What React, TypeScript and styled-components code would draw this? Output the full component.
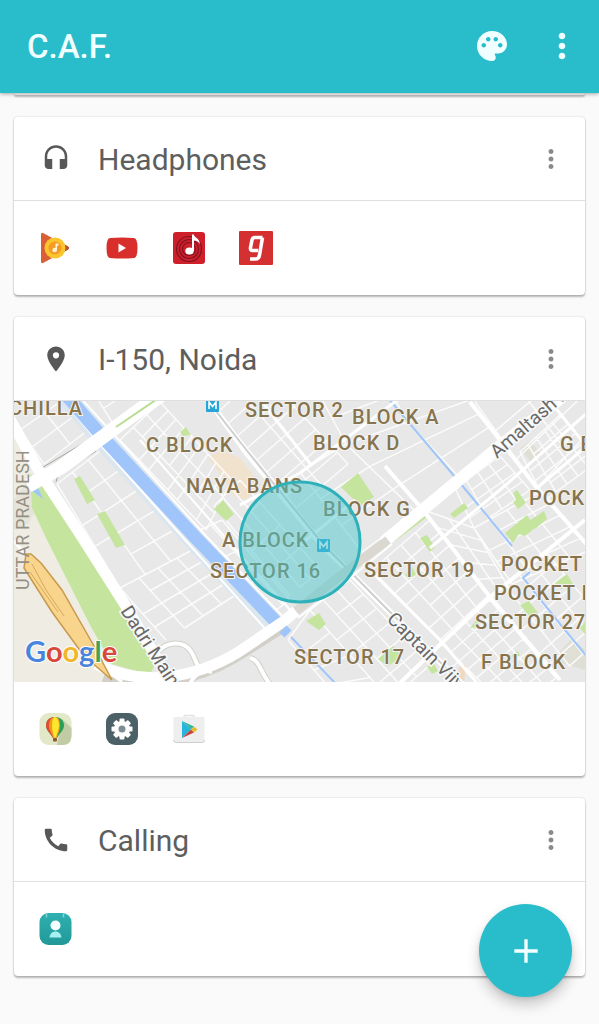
import React from "react";
import styled, { createGlobalStyle } from "styled-components";
import { MdAdd, MdCall, MdHeadset, MdMoreVert, MdPalette, MdPlace } from "react-icons/md";

const teal = "#29bdcb";

const GlobalStyle = createGlobalStyle`
  * { box-sizing: border-box; }
  body {
    margin: 0;
    background: #fafafa;
    font-family: Roboto, "Liberation Sans", sans-serif;
    color: #5e5e5e;
  }
`;

const Page = styled.div`
  min-height: 100vh;
`;

const AppBar = styled.header`
  position: sticky;
  top: 0;
  z-index: 2;
  display: flex;
  align-items: center;
  height: 93px;
  padding: 0 14px 2px 27px;
  background: ${teal};
  box-shadow: 0 1px 4px rgba(0, 0, 0, 0.35);
`;

const AppTitle = styled.h1`
  flex: 1;
  margin: 0;
  padding-top: 2px;
  font-size: 33px;
  line-height: 40px;
  font-weight: 500;
  color: #f0ffff;
`;

const BarActions = styled.div`
  display: flex;
  align-items: center;
  gap: 26px;
`;

const IconButton = styled.button<{ $size: number; $color: string }>`
  display: flex;
  align-items: center;
  justify-content: center;
  width: ${(p) => p.$size + 6}px;
  height: ${(p) => p.$size + 6}px;
  padding: 0;
  border: 0;
  background: none;
  color: ${(p) => p.$color};
  font-size: ${(p) => p.$size}px;
  cursor: pointer;
`;

const Feed = styled.main`
  display: flex;
  flex-direction: column;
  gap: 22px;
  padding: 0 14px 47px;
`;

const cardShadow = "0 2px 2px rgba(0, 0, 0, 0.26), 0 0 2px rgba(0, 0, 0, 0.2)";

const PassedCard = styled.div`
  height: 2px;
  border-radius: 0 0 4px 4px;
  background: #fff;
  box-shadow: ${cardShadow};
`;

const Card = styled.section`
  border-radius: 4px;
  background: #fff;
  box-shadow: ${cardShadow};
  overflow: hidden;
`;

const CardHeader = styled.header`
  display: flex;
  align-items: center;
  height: 84px;
  padding: 0 16px 0 27px;
  border-bottom: 1px solid #e0e0e0;
`;

const CardIcon = styled.span`
  display: flex;
  width: 57px;
  font-size: 30px;
  color: #585858;
`;

const CardTitle = styled.h2`
  flex: 1;
  margin: 0;
  padding-top: 2px;
  font-size: 30px;
  line-height: 36px;
  font-weight: 400;
`;

const AppRow = styled.div`
  display: flex;
  align-items: center;
  gap: 33px;
  height: 94px;
  padding: 0 24px;
`;

const AppButton = styled.button`
  width: 34px;
  height: 34px;
  padding: 0;
  border: 0;
  background: none;
  cursor: pointer;

  svg {
    display: block;
    width: 100%;
    height: 100%;
  }
`;

const MapPicture = styled.svg`
  display: block;
  width: 100%;
  height: auto;
`;

const AreaLabel = styled.text`
  font-size: 20px;
  font-weight: 500;
  letter-spacing: 1px;
  fill: #85744f;
  stroke: #f4f2ee;
  stroke-width: 2px;
  paint-order: stroke;
`;

const RoadLabel = styled.text`
  font-size: 19px;
  fill: #686868;
  stroke: #f8f8f8;
  stroke-width: 3px;
  paint-order: stroke;
`;

const StateLabel = styled.text`
  font-size: 18px;
  fill: #949084;
`;

const MapBrand = styled.text`
  font-family: Lato, Roboto, sans-serif;
  font-size: 29px;
  font-weight: 700;
  stroke: #fff;
  stroke-width: 2px;
  paint-order: stroke;
`;

const AddButton = styled.button`
  position: fixed;
  right: 27px;
  bottom: 27px;
  z-index: 3;
  display: flex;
  align-items: center;
  justify-content: center;
  width: 93px;
  height: 93px;
  padding: 0;
  border: 0;
  border-radius: 50%;
  background: ${teal};
  color: #f4ffff;
  font-size: 40px;
  box-shadow: 0 8px 14px rgba(0, 0, 0, 0.2), 0 2px 4px rgba(0, 0, 0, 0.1);
  cursor: pointer;
`;

type Point = [number, number];

const mix = (a: Point, b: Point, t: number): Point => [a[0] + (b[0] - a[0]) * t, a[1] + (b[1] - a[1]) * t];

/* Streets of one city block: corners a, b, c, d in order round the block. */
function streets([a, b, c, d]: Point[], cols: number, rows: number): string {
  const parts: string[] = [];
  for (let i = 0; i <= cols; i++) {
    const t = i / cols;
    parts.push(`M${mix(a, b, t).join(" ")}L${mix(d, c, t).join(" ")}`);
  }
  for (let j = 0; j <= rows; j++) {
    const t = j / rows;
    const skip = j % 3 === 1 && cols > 2 ? 1 / cols : 0;
    const from = mix(a, d, t);
    const to = mix(b, c, t);
    parts.push(`M${mix(from, to, skip).join(" ")}L${to.join(" ")}`);
  }
  return parts.join("");
}

const minorStreets = [
  streets([[57, 484], [104, 448], [196, 548], [120, 588]], 3, 5),
  streets([[120, 588], [196, 548], [240, 592], [166, 640]], 4, 4),
  streets([[120, 440], [160, 402], [232, 480], [206, 530]], 3, 9),
  streets([[20, 430], [70, 395], [96, 424], [44, 464]], 2, 2),
  streets([[95, 395], [150, 350], [180, 385], [112, 422]], 2, 2),
  streets([[218, 412], [262, 372], [348, 464], [296, 508]], 2, 8),
  streets([[290, 340], [400, 290], [470, 400], [346, 444]], 2, 4),
  streets([[346, 444], [470, 400], [500, 440], [416, 512]], 2, 3),
  streets([[300, 472], [346, 444], [416, 512], [362, 552]], 1, 3),
  streets([[475, 402], [545, 350], [600, 420], [537, 488]], 2, 3),
  streets([[520, 452], [560, 415], [600, 460], [545, 500]], 5, 5),
  streets([[455, 488], [500, 456], [530, 490], [474, 528]], 4, 4),
  streets([[424, 510], [474, 528], [510, 590], [490, 597]], 2, 5),
  streets([[474, 528], [540, 492], [590, 550], [512, 584]], 4, 5),
  streets([[372, 570], [430, 520], [488, 596], [440, 640]], 4, 6),
  streets([[310, 610], [350, 580], [430, 665], [390, 700]], 3, 6),
  streets([[288, 640], [310, 610], [390, 700], [340, 700]], 1, 4),
  streets([[430, 655], [490, 600], [556, 678], [500, 720]], 5, 8),
  streets([[492, 597], [546, 552], [610, 630], [556, 678]], 4, 7),
  streets([[200, 530], [222, 520], [290, 600], [276, 610]], 2, 3),
  streets([[214, 506], [240, 480], [320, 570], [290, 596]], 3, 4),
].join("");

function MetroStop({ x, y }: { x: number; y: number }) {
  return (
    <g>
      <rect x={x} y={y} width="13" height="13" rx="1" fill="#27a4d8" />
      <path d={`M${x + 3} ${y + 10}V${y + 3}l3.500 4.500 3.500-4.500v7`} fill="none" stroke="#fff" strokeWidth="1.600" />
    </g>
  );
}

const areas: [string, number, number][] = [
  ["CHILLA", 9, 415],
  ["SECTOR 2", 245, 417],
  ["BLOCK A", 352, 424],
  ["C BLOCK", 146, 452],
  ["BLOCK D", 313, 450],
  ["G BLOCK", 560, 451],
  ["NAYA BANS", 186, 493],
  ["BLOCK G", 323, 516],
  ["POCKET", 529, 505],
  ["A BLOCK", 222, 547],
  ["SECTOR 16", 210, 578],
  ["SECTOR 19", 364, 577],
  ["POCKET", 501, 571],
  ["POCKET I", 494, 600],
  ["SECTOR 27", 475, 629],
  ["SECTOR 17", 294, 664],
  ["F BLOCK", 481, 669],
];

const rampLoops = "M158 652C166 642 182 640 190 650S192 668 212 672M190 684C194 674 206 668 216 664M250 658C260 660 260 672 270 684";

function PlaceMap() {
  return (
    <MapPicture viewBox="14 401 571 281" role="img" aria-label="Map of Noida">
      <rect x="14" y="401" width="571" height="281" fill="#e8e8e8" />
      <path d="M14 430L48 490 112 668 125 682H14Z" fill="#efece4" />
      <path d="M14 500l14-20 8 30 -8 14 -14 6Z" fill="#e6e3d8" />
      <path d="M208 458l12-8 20 8 20 26 -14 16 -12-4 -18-28Z" fill="#f1e2cd" />
      <path d="M520 448l10-7 12 14 -10 9Z M552 660l20-22 13 12v20Z" fill="#e0dfd6" />
      <path d={minorStreets} fill="none" stroke="#fbfbfb" strokeWidth="1.500" />

      <g fill="#c5e59f">
        <path d="M30 474L42 484 82 543 156 662 150 675 112 664 90 625 47 540 32 508Z" />
        <path d="M74 479l6-3 15 24 -8 4Z M97 514l8-3 20 34 -9 3Z" />
        <path d="M341 487l17-14 16 24 -14 9Z M214 509l9-9 11 14 -8 7Z" />
        <path d="M306 621l13-8 7 11 -7 6Z M378 659l15-13 9 10 -14 10Z" />
        <path d="M450 514l14-11 4 5 -14 10Z M513 493l4-3 9 13 -8 6 -5-7 3-2Z" />
        <path d="M505 533l22-18 8 13 -10 8 -6-2 -6 9Z M529 521l15-10 3 8 -12 10Z" />
        <path d="M393 538l31-22 2 2 -31 23Z M420 538l7-3 8 12 -5 5Z" />
        <path d="M555 583l12-9 6 10 -12 5Z M520 605l9-4 9 12 -9 3Z M470 628l8-10 2 9Z" />
        <path d="M427 667l6-5 5 9 -6 3Z M405 575l7-8 4 8 -7 4Z M180 432l6-5 5 8 -8 1Z" />
        <path d="M580 628l5-6v12Z M510 657l8-6 2 5Z" />
      </g>
      <path d="M458 672l3-9 5 3 -2 16 -5 0Z" fill="#f0d8c2" />

      <path d="M66 395L106 443 194 540 278 628" fill="none" stroke="#dbe6ee" strokeWidth="21" />
      <path d="M59 395L99 443 187 542 270 634M78 395L116 437 206 536 288 622" fill="none" stroke="#fff" strokeWidth="2" />
      <path d="M66 395L106 441 194 536 278 624" fill="none" stroke="#9fc5fa" strokeWidth="13" />
      <path d="M291 637L336 684" fill="none" stroke="#9fc5fa" strokeWidth="2" />
      <path d="M388 398L455 477 480 507 512 546M530 572L523 578 560 624 588 658" fill="none" stroke="#9fc5fa" strokeWidth="2" />
      <path d="M31 490l7-2 5 11Z" fill="#9fc5fa" />

      <g fill="none" stroke="#fff" strokeLinejoin="round">
        <path d="M470 402L500 440 537 488 588 546" strokeWidth="4" />
        <path d="M385 466L423 510 490 597 560 680" strokeWidth="4" />
        <path d="M400 683L490 597 585 520" strokeWidth="4" />
        <path d="M430 548L507 484 588 412M262 402L312 466M240 505L300 473 400 398M355 500L300 545" strokeWidth="3" />
        <path d="M140 440L245 560 292 612M118 433L172 395" strokeWidth="2" />
        <path d="M537 488L588 445M545 395L588 448M360 560L440 640 478 684" strokeWidth="3" />
      </g>

      <path d="M40 469L92 438M56 482L58 475 96 451" stroke="#a8a49c" strokeWidth="1" fill="none" />
      <path d="M210 402L246 452 322 545 386 608 462 684" fill="none" stroke="#fff" strokeWidth="6" />
      <path d="M212 406L248 452 322 543 386 608 462 684" fill="none" stroke="#cfcfcf" strokeWidth="2" />

      <path d={rampLoops} fill="none" stroke="#d2d0c8" strokeWidth="6" />
      <path d="M104 676C150 694 210 674 246 650L284 626" fill="none" stroke="#d2d0c8" strokeWidth="12" />
      <g fill="none" stroke="#fff" strokeLinejoin="round">
        <path d={rampLoops} strokeWidth="4" />
        <path d="M6 412L42 476 80 534 122 600 158 660" strokeWidth="11" />
        <path d="M28 486L60 468 104 436 158 396" strokeWidth="14" />
        <path d="M96 664C150 692 210 672 246 647L284 621 296 611" strokeWidth="11" />
        <path d="M386 540L500 446 566 394" strokeWidth="12" strokeLinecap="round" />
      </g>
      <path d="M116 427L166 393" fill="none" stroke="#b8dc90" strokeWidth="2" />
      <path d="M296 611L336 579 388 540" fill="none" stroke="#dad8d0" strokeWidth="9" />
      <path d="M298 618L350 578 392 544" fill="none" stroke="#fff" strokeWidth="2" />
      <path d="M283 629l5 5" fill="none" stroke="#9fc5fa" strokeWidth="10" />

      <path d="M14 541L30 560 52 596 84 646 104 668 122 682" fill="none" stroke="#fff" strokeWidth="3" />
      <path d="M26 554L31 554 41 563 62 590 94 646 112 680 84 656 52 612 24 568Z" fill="#f8d48c" stroke="#c99a4d" strokeWidth="1.500" />
      <path d="M32 564L46 590 64 616M30 572L58 612" fill="none" stroke="#d8a95b" strokeWidth="1" />

      <MetroStop x={206} y={399} />
      <MetroStop x={317} y={539} />
      {areas.map(([name, x, y]) => (
        <AreaLabel key={`${name}${y}`} x={x} y={y}>
          {name}
        </AreaLabel>
      ))}
      <StateLabel transform="translate(29 590) rotate(-90)">UTTAR PRADESH</StateLabel>
      <RoadLabel transform="translate(497 459) rotate(-41)">Amaltash M</RoadLabel>
      <RoadLabel transform="translate(120 611) rotate(57)">Dadri Main</RoadLabel>
      <RoadLabel transform="translate(386 620) rotate(45)">Captain Vijv</RoadLabel>

      <circle cx="300" cy="542" r="60" fill="#4cc5ce" fillOpacity="0.5" stroke="#2fb1ba" strokeWidth="3" />
      <MapBrand x="25" y="662">
        <tspan fill="#4a84dc">G</tspan>
        <tspan fill="#d8493c">o</tspan>
        <tspan fill="#f0b62c">o</tspan>
        <tspan fill="#4a84dc">g</tspan>
        <tspan fill="#3fa35a">l</tspan>
        <tspan fill="#d8493c">e</tspan>
      </MapBrand>
    </MapPicture>
  );
}

const PlayMusicIcon = () => (
  <svg viewBox="0 0 34 34" aria-hidden="true">
    <path d="M3 3.500Q3 1 5.500 2.200L30 15.500Q32 17 30 18.500L5.500 31.800Q3 33 3 30.500Z" fill="#db5f36" />
    <path d="M26 13l4 2.500Q32 17 30 18.500L26 21Z" fill="#b84f35" />
    <circle cx="17" cy="17" r="10.500" fill="#fbc62c" />
    <circle cx="17" cy="17" r="6.500" fill="#f59a22" />
    <path d="M17.500 12.500h3v2.200h-1.500v4.300a2.300 2.300 0 1 1-1.500-2.100Z" fill="#fff4cf" />
  </svg>
);

const YouTubeIcon = () => (
  <svg viewBox="0 0 34 34" aria-hidden="true">
    <path d="M5 7Q17 6 29 7Q32.500 7.500 32.500 17T29 27Q17 28 5 27Q1.500 26.500 1.500 17T5 7Z" fill="#d92f2c" />
    <path d="M13.500 12.500v9l7.500-4.500Z" fill="#fff" />
  </svg>
);

const MusicPlayerIcon = () => (
  <svg viewBox="0 0 34 34" aria-hidden="true">
    <rect x="1" y="1" width="32" height="32" rx="3" fill="#cf1f2b" />
    <g fill="none" stroke="#7d1420" strokeWidth="1.200">
      <circle cx="17" cy="18" r="12.500" />
      <circle cx="17" cy="18" r="9.500" />
      <circle cx="17" cy="18" r="6.500" />
    </g>
    <ellipse cx="17.500" cy="20" rx="4.200" ry="3.500" fill="#fff" />
    <path d="M20 20V3.500h1.800c.5 3.500 6 3.500 6 9.500c-1.500-3-4-3.500-5.800-3.500V20Z" fill="#fff" />
  </svg>
);

const GaanaIcon = () => (
  <svg viewBox="0 0 34 34" aria-hidden="true">
    <rect width="34" height="34" rx="1" fill="#d42f31" />
    <path
      d="M23.500 6.500H16q-2.500 0-3 2.500l-1.500 7.500q-.4 3 2 3h5.500M23.500 6.500L20.500 24q-.6 4-4 4H11"
      fill="none"
      stroke="#fff"
      strokeWidth="3.600"
      strokeLinejoin="round"
    />
  </svg>
);

const BalloonIcon = () => (
  <svg viewBox="0 0 34 34" aria-hidden="true">
    <rect x="1.500" y="1" width="32" height="32" rx="9" fill="#e2e8c8" />
    <path d="M24 7l9.500 9v8q0 9-9 9H19Z" fill="#c2cca4" />
    <path d="M17 5c-6 0-9 4-9 8.500 0 5 5 8 6.500 12h5c1.500-4 6.500-7 6.500-12C26 9 23 5 17 5Z" fill="#2d9d55" />
    <path d="M17 5c-6 0-9 4-9 8.500 0 5 5 8 6.500 12H17Z" fill="#e34c2f" />
    <path d="M17 5c-4 0-6 4-6 8.500s3 8 4 12h4c1-4 3-7.500 3-12S21 5 17 5Z" fill="#ef9b20" />
    <path d="M17 5c-2 0-3 4-3 8.500s1.500 8 2 12h2c.500-4 3-7.500 3-12S19 5 17 5Z" fill="#ffe62e" />
    <rect x="15" y="26" width="4" height="3.500" rx="1" fill="#8a5a2c" />
  </svg>
);

const SettingsIcon = () => (
  <svg viewBox="0 0 34 34" aria-hidden="true">
    <rect x="1" y="1" width="32" height="32" rx="9" fill="#4c6067" />
    <g fill="#fff">
      {[0, 45, 90, 135].map((turn) => (
        <rect key={turn} x="14.500" y="6.500" width="5" height="21" rx="1" transform={`rotate(${turn} 17 17)`} />
      ))}
      <circle cx="17" cy="17" r="8" />
    </g>
    <circle cx="17" cy="17" r="3.500" fill="#7e8d92" />
  </svg>
);

const PlayStoreIcon = () => (
  <svg viewBox="0 0 34 34" aria-hidden="true">
    <path d="M12 6V4.500q0-1 1-1h8q1 0 1 1V6" fill="none" stroke="#e2e2e2" strokeWidth="1.500" />
    <path d="M1.500 5h31v23q0 2.500-2.500 2.500H4Q1.500 30.500 1.500 28Z" fill="#eeeeee" />
    <path d="M1.500 28Q1.500 30.500 4 30.500h26q2.500 0 2.500-2.500" fill="none" stroke="#cfcfcf" />
    <path d="M10 9v17l9-8.500Z" fill="#28b5dc" />
    <path d="M10 9l9 8.500 3-3Z" fill="#35b8a0" />
    <path d="M10 26l9-8.500 3 3Z" fill="#c8433c" />
    <path d="M22 14.500l3.500 3-3.500 3-3-3Z" fill="#e5bd35" />
  </svg>
);

const ContactIcon = () => (
  <svg viewBox="0 0 34 34" aria-hidden="true">
    <defs>
      <linearGradient id="contact" x1="0" y1="0" x2="0" y2="1">
        <stop offset="0" stopColor="#2fb0b0" />
        <stop offset="1" stopColor="#229898" />
      </linearGradient>
    </defs>
    <rect x="1.500" y="1" width="32" height="32" rx="9" fill="url(#contact)" />
    <path d="M8.500 1.500v4M25.500 1.500v4" stroke="#7fd6d3" strokeWidth="1.500" />
    <circle cx="17.500" cy="13.500" r="5" fill="#f4ffff" />
    <path d="M11.500 25.500c.5-4 3-6 6-6s5.500 2 6 6Z" fill="#a5f0f0" />
  </svg>
);

interface App {
  name: string;
  Icon: React.ComponentType;
}

interface TriggerCardProps {
  title: string;
  icon: React.ReactNode;
  apps: App[];
  children?: React.ReactNode;
}

function TriggerCard({ title, icon, apps, children }: TriggerCardProps) {
  return (
    <Card>
      <CardHeader>
        <CardIcon>{icon}</CardIcon>
        <CardTitle>{title}</CardTitle>
        <IconButton $size={30} $color="#8a8a8a" aria-label={`Options for ${title}`}>
          <MdMoreVert />
        </IconButton>
      </CardHeader>
      {children}
      <AppRow>
        {apps.map(({ name, Icon }) => (
          <AppButton key={name} aria-label={name}>
            <Icon />
          </AppButton>
        ))}
      </AppRow>
    </Card>
  );
}

export default function App() {
  return (
    <Page>
      <GlobalStyle />
      <AppBar>
        <AppTitle>C.A.F.</AppTitle>
        <BarActions>
          <IconButton $size={36} $color="#f0ffff" aria-label="Theme">
            <MdPalette />
          </IconButton>
          <IconButton $size={40} $color="#f0ffff" aria-label="More options">
            <MdMoreVert />
          </IconButton>
        </BarActions>
      </AppBar>
      <Feed>
        <PassedCard />
        <TriggerCard
          title="Headphones"
          icon={<MdHeadset />}
          apps={[
            { name: "Play Music", Icon: PlayMusicIcon },
            { name: "YouTube", Icon: YouTubeIcon },
            { name: "Music Player", Icon: MusicPlayerIcon },
            { name: "Gaana", Icon: GaanaIcon },
          ]}
        />
        <TriggerCard
          title="I-150, Noida"
          icon={<MdPlace />}
          apps={[
            { name: "Travel", Icon: BalloonIcon },
            { name: "Settings", Icon: SettingsIcon },
            { name: "Play Store", Icon: PlayStoreIcon },
          ]}
        >
          <PlaceMap />
        </TriggerCard>
        <TriggerCard title="Calling" icon={<MdCall />} apps={[{ name: "Contacts", Icon: ContactIcon }]} />
      </Feed>
      <AddButton aria-label="Add">
        <MdAdd />
      </AddButton>
    </Page>
  );
}
